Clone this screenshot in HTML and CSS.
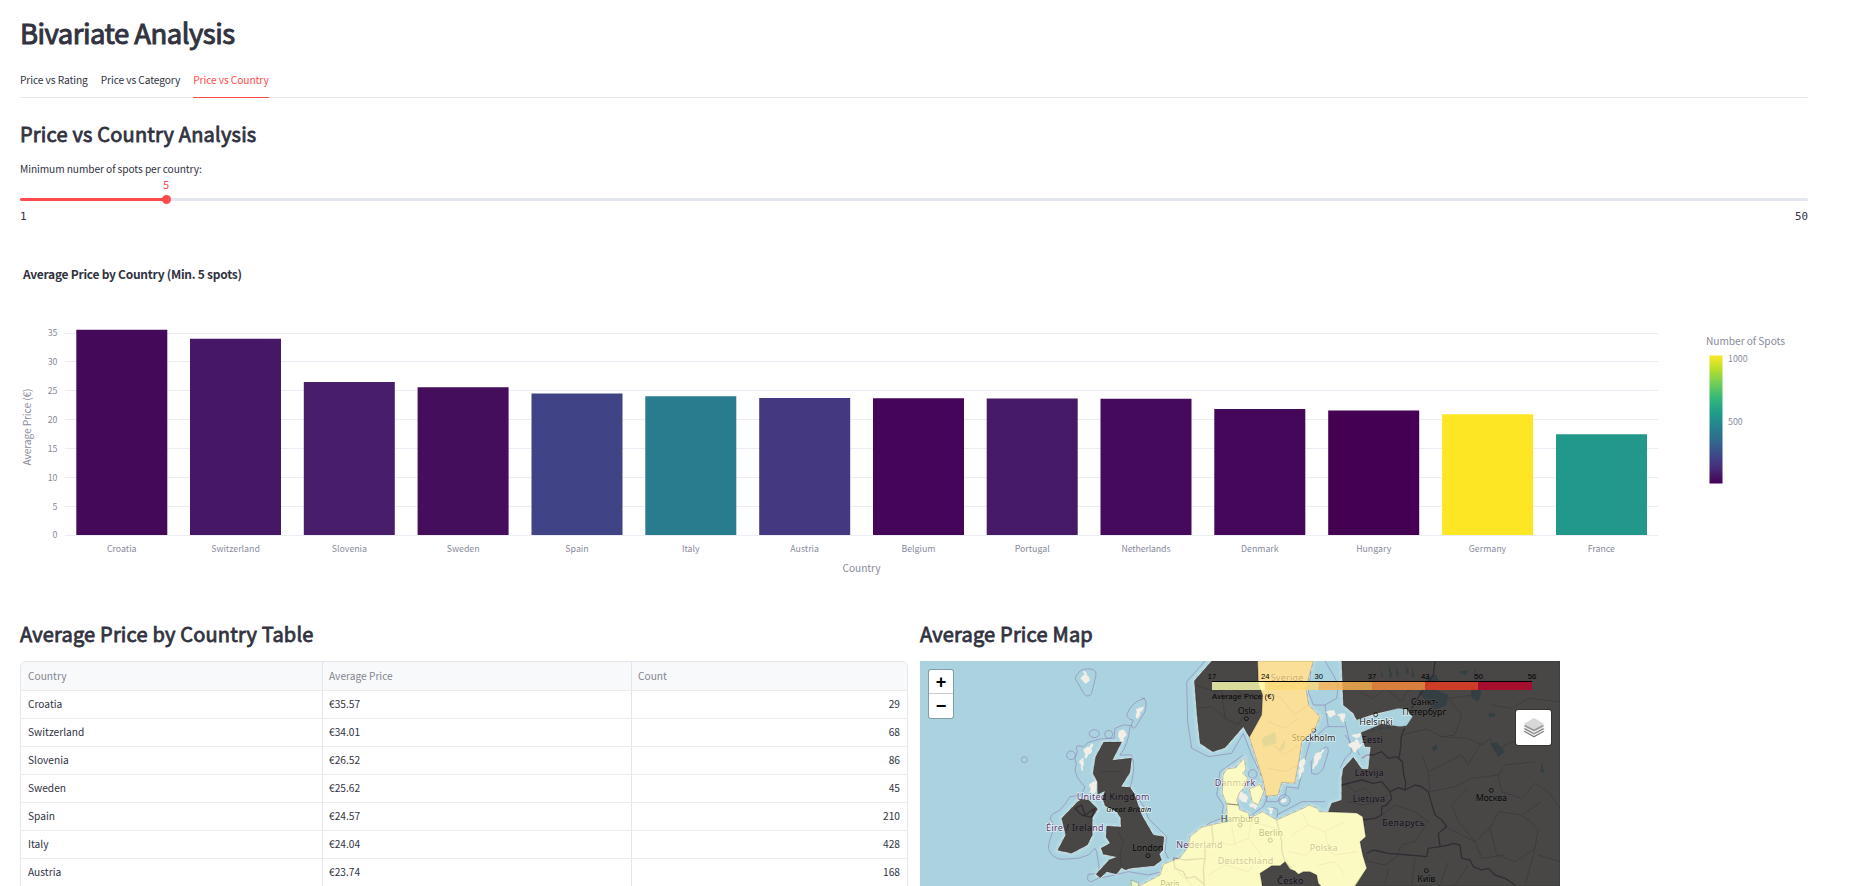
FILE: index.html
```html
<!DOCTYPE html>
<html lang="en">
<head>
<meta charset="utf-8">
<title>Bivariate Analysis</title>
<link rel="stylesheet" href="styles.css">
</head>
<body>
<main class="page">
  <h1 class="title">Bivariate Analysis</h1>
  <nav class="tabs">
    <a class="tab">Price vs Rating</a>
    <a class="tab">Price vs Category</a>
    <a class="tab active">Price vs Country</a>
  </nav>
  <h2 class="heading">Price vs Country Analysis</h2>
  <div class="slider">
    <div class="slider-label">Minimum number of spots per country:</div>
    <div class="track"><div class="fill"><span class="thumb"></span><span class="value">5</span></div></div>
    <div class="limits"><span>1</span><span>50</span></div>
  </div>

  <svg class="chart" width="1788" height="340" viewBox="20 260 1788 340">
    <defs>
      <linearGradient id="viridis" x1="0" y1="1" x2="0" y2="0">
        <stop offset="0" stop-color="#440154"/><stop offset=".111" stop-color="#482878"/>
        <stop offset=".222" stop-color="#3e4989"/><stop offset=".333" stop-color="#31688e"/>
        <stop offset=".444" stop-color="#26828e"/><stop offset=".556" stop-color="#1f9e89"/>
        <stop offset=".667" stop-color="#35b779"/><stop offset=".778" stop-color="#6ece58"/>
        <stop offset=".889" stop-color="#b5de2b"/><stop offset="1" stop-color="#fde725"/>
      </linearGradient>
    </defs>
    <text class="chart-title" x="23" y="279" textLength="219">Average Price by Country (Min. 5 spots)</text>
    <path class="grid" d="M65 535.5H1658M65 506.5H1658M65 477.5H1658M65 448.5H1658M65 419.5H1658M65 390.5H1658M65 361.5H1658M65 333.5H1658"/>
    <g class="tick end">
      <text x="57.5" y="538">0</text><text x="57.5" y="510">5</text><text x="57.5" y="481">10</text><text x="57.5" y="452">15</text>
      <text x="57.5" y="423">20</text><text x="57.5" y="394">25</text><text x="57.5" y="365">30</text><text x="57.5" y="336">35</text>
    </g>
    <g>
      <path fill="#440958" d="M76.3 329.8h91v205.2h-91z"/>
      <path fill="#461767" d="M190 338.8h91v196.2h-91z"/>
      <path fill="#481e6b" d="M303.8 382h91v153h-91z"/>
      <path fill="#450e5d" d="M417.6 387.3h91v147.7h-91z"/>
      <path fill="#404487" d="M531.5 393.4h91v141.6h-91z"/>
      <path fill="#297b8e" d="M645.3 396.3h91v138.7h-91z"/>
      <path fill="#443880" d="M759.2 398h91v137h-91z"/>
      <path fill="#450659" d="M873 398.3h91v136.7h-91z"/>
      <path fill="#461969" d="M986.7 398.4h91v136.6h-91z"/>
      <path fill="#450a5b" d="M1100.5 398.8h91v136.2h-91z"/>
      <path fill="#440759" d="M1214.3 409h91v126h-91z"/>
      <path fill="#440154" d="M1328.2 410.4h91v124.6h-91z"/>
      <path fill="#fde725" d="M1442.1 414.3h91v120.7h-91z"/>
      <path fill="#21988a" d="M1556 434.2h91v100.8h-91z"/>
    </g>
    <g class="tick mid">
      <text x="121.7" y="552">Croatia</text><text x="235.5" y="552">Switzerland</text><text x="349.4" y="552">Slovenia</text>
      <text x="463.2" y="552">Sweden</text><text x="577" y="552">Spain</text><text x="690.8" y="552">Italy</text>
      <text x="804.6" y="552">Austria</text><text x="918.4" y="552">Belgium</text><text x="1032.2" y="552">Portugal</text>
      <text x="1146" y="552" textLength="49">Netherlands</text><text x="1259.8" y="552">Denmark</text><text x="1373.7" y="552">Hungary</text>
      <text x="1487.5" y="552">Germany</text><text x="1601.3" y="552">France</text>
    </g>
    <text class="axis mid" x="861.5" y="572" textLength="38">Country</text>
    <text class="axis mid" transform="translate(31 427) rotate(-90)" textLength="77">Average Price (€)</text>
    <text class="axis" x="1706" y="345" textLength="79">Number of Spots</text>
    <rect x="1709.5" y="355.5" width="13" height="128" fill="url(#viridis)"/>
    <g class="tick"><text x="1728" y="362">1000</text><text x="1728" y="425">500</text></g>
  </svg>

  <div class="columns">
    <section>
      <h2 class="heading">Average Price by Country Table</h2>
      <div class="table">
        <div class="row head"><span>Country</span><span>Average Price</span><span>Count</span></div>
        <div class="row"><span>Croatia</span><span>€35.57</span><span>29</span></div>
        <div class="row"><span>Switzerland</span><span>€34.01</span><span>68</span></div>
        <div class="row"><span>Slovenia</span><span>€26.52</span><span>86</span></div>
        <div class="row"><span>Sweden</span><span>€25.62</span><span>45</span></div>
        <div class="row"><span>Spain</span><span>€24.57</span><span>210</span></div>
        <div class="row"><span>Italy</span><span>€24.04</span><span>428</span></div>
        <div class="row"><span>Austria</span><span>€23.74</span><span>168</span></div>
      </div>
    </section>
    <section>
      <h2 class="heading">Average Price Map</h2>
      <div class="map">
        <svg width="640" height="225" viewBox="15 18 1920 675">
          <defs>
            <path id="gb" d="M566 261L620 261 592 316 650 309 645 352 618 395 645 397 657 415 680 480 715 540 747 545 743 585 733 598 740 615 718 632 645 640 632 645 620 638 604 657 575 650 556 668 543 658 583 614 606 606 565 598 558 580 585 565 573 545 575 513 618 516 617 488 605 470 570 452 563 430 570 408 548 418 547 380 534 355 542 305z"/>
            <path id="ie" d="M440 490L488 440 500 433 522 436 548 462 532 488 532 540 517 570 470 595 428 586 452 540z"/>
            <path id="no" d="M890 18L838 77 846 180 855 265 893 290 930 278 985 215 1003 247 1040 180 1043 120 1030 85 1028 18z"/>
            <path id="se" d="M1028 18L1195 18 1183 60 1173 100 1181 150 1215 185 1198 225 1160 262 1153 310 1139 385 1100 382 1089 420 1054 424 1043 372 1003 247 1040 180 1043 120 1030 85z"/>
            <path id="dk" d="M988 308L992 345 983 355 998 368 987 400 975 410 965 435 971 450 935 446 922 415 924 360 935 342 963 338zM1003 402L1035 388 1046 410 1030 450 1012 440z"/>
            <path id="mid" d="M935 448L971 450 973 464 1001 475 1003 490 1043 470 1085 495 1175 455 1180 450 1207 460 1213 470 1325 474 1343 485 1352 545 1335 560 1343 600 1355 640 1317 700H660L735 660 745 628 795 608 820 575 825 545 860 517 895 508 937 500z"/>
            <path id="fr" d="M648 675L672 684 668 700H650z"/>
            <path id="ru" d="M1280 18H1935V693H1317L1355 640 1343 600 1335 560 1352 545 1343 485 1325 474 1275 474 1240 470 1250 445 1280 435 1280 370 1285 340 1315 307 1340 342 1360 343 1367 275 1350 275 1338 235 1465 213 1400 216 1338 233V213L1325 194 1315 175 1285 150z"/>
            <path id="gulf" d="M1325 194L1375 182 1450 160 1475 162 1493 185 1475 212 1455 215 1400 207 1338 233 1310 240 1300 200z"/>
            <path id="cz" d="M1035 655L1070 632 1095 632 1110 620 1125 642 1140 648 1150 658 1165 650 1185 650 1205 660 1210 685 1225 700H1043z"/>
          </defs>
          <rect class="sea" x="15" y="18" width="1920" height="675"/>
          <g class="halo">
            <use href="#gb"/><use href="#ie"/><use href="#no"/><use href="#se"/><use href="#dk"/><use href="#mid"/><use href="#ru"/>
          </g>
          <g class="sea-border">
            <path d="M480 70Q490 45 510 42 545 38 543 60L530 115Q520 130 508 118z"/>
            <ellipse cx="538" cy="236" rx="15" ry="12"/><circle cx="581" cy="238" r="12"/><circle cx="468" cy="301" r="13"/><circle cx="328" cy="314" r="9"/>
            <path d="M690 130Q650 138 635 180 640 195 655 195L648 212Q655 225 662 215L690 170Q700 130 680 128"/>
            <path d="M653 212L625 210 600 220 597 250 555 252 520 262 505 275Q475 265 487 290L480 310Q488 330 480 345L486 365 500 385 510 395 500 420 465 425Q450 450 435 465L412 478 405 490 420 515Q400 560 400 580 410 610 440 613L490 610 520 600 540 580 545 590 555 655 520 658Q512 680 530 680L550 670 590 662 640 650 700 660 740 650 790 615 820 605 840 585 845 550 880 505 920 490 925 450 905 420 915 350 950 325 985 300"/>
            <path d="M645 215Q640 270 615 300L650 300Q665 330 645 400L670 430 690 460 700 490 730 520 755 545 750 590 760 610"/>
            <path d="M870 18L815 80 818 200 830 280 880 305 950 295 985 235 1010 300 1045 375 1055 440 1085 440 1110 425 1115 395 1150 400 1165 330 1185 260 1235 215 1290 215"/>
            <path d="M1190 30L1180 110 1195 150 1230 150 1265 130 1270 90 1255 60 1230 18M1230 150L1240 215"/>
            <path d="M1215 290Q1240 260 1240 290L1225 340Q1210 365 1190 355L1188 320z"/>
            <circle cx="1108" cy="436" r="17"/><circle cx="1013" cy="357" r="13"/>
            <path d="M1010 480L1045 455 1060 420M1085 490Q1100 450 1060 460M1085 480L1160 440 1230 440M1290 200L1310 290 1290 310 1275 340M1310 230L1375 200 1450 175M1290 240L1335 300"/>
          </g>
          <g class="land">
            <path d="M498 72L508 60 507 50 518 62 522 75 516 85z"/>
            <path d="M612 230L628 225 632 240 622 258 612 250zM508 285L532 268 528 290 512 308zM495 320L505 310 502 345zM525 390L545 375 540 415 528 410z"/>
            <path d="M665 165L685 155 675 175 665 193z"/>
            <path d="M970 418Q985 405 998 430L995 440 978 438zM1005 448L1025 448 1022 460 1008 455z"/>
            <path d="M1200 300L1225 285 1212 315 1195 340zM1155 320L1170 310 1163 350 1152 370zM1060 460L1075 462 1068 475zM1100 434h14v6h-14zM1235 172L1255 165 1260 180 1245 185zM1270 180L1290 175 1285 200z"/>
            <path d="M1302 270L1325 255 1338 270 1320 290zM1310 240L1335 235 1330 250z"/>
            <use href="#gb"/><use href="#ie"/><use href="#no"/><use href="#se"/><use href="#dk"/><use href="#mid"/><use href="#ru"/>
          </g>
          <use class="gulf" href="#gulf"/>
          <g class="lakes">
            <path d="M1510 110L1550 100 1600 120 1595 150 1560 165 1535 140zM1665 90L1700 110 1690 140 1670 130zM1630 50L1660 45 1650 60zM1725 265L1745 262 1770 290 1750 305zM1550 278L1565 268 1568 280 1555 290zM1720 175h20v10h-20zM1880 320L1888 355 1876 350zM1420 25L1432 60 1425 75zM1440 30L1452 58 1446 70zM1470 25L1483 52 1475 60zM1490 35L1500 65 1492 68zM1395 40L1405 62 1400 68zM1530 65L1565 60 1572 80 1540 88zM1040 250L1080 230 1085 265 1045 275zM1088 290L1112 250 1108 280z"/>
          </g>
          <g class="region">
            <path d="M1333 110L1375 130 1410 100 1460 140 1475 110 1520 90 1560 60M1460 240L1535 222 1580 245 1660 250 1700 270 1725 250 1740 290 1780 265 1850 245 1870 205M1520 300L1540 350 1640 300 1660 330 1700 260M1540 350L1545 410 1620 395 1670 370 1750 360 1770 330 1860 320M1750 360L1760 410 1820 430 1860 385 1900 410 1935 460M1660 400L1610 450 1630 500 1680 560 1725 520 1750 470 1820 480 1880 440M1725 520L1745 600 1800 620 1860 580 1870 520 1820 480M1600 520L1680 560 1700 610 1770 600M1335 570L1360 620 1410 630 1450 600M1445 600L1460 570 1500 560 1540 500M1400 480L1440 450 1500 470 1540 500M1420 640L1410 690M1500 610L1490 690M1600 620L1575 690M1660 630L1620 690M1870 600L1935 620M1830 690L1860 580M1640 180L1620 240 1580 245M1640 180L1600 130 1675 120 1680 40M1730 150L1790 160 1840 130 1935 140"/>
            <path d="M850 160L890 155 930 190 970 210 985 180 1040 170M845 90L900 110 950 100 1000 130M920 110L930 190M1055 110L1100 130 1140 180 1180 150M1060 200L1110 220 1150 190M1075 270L1110 300 1150 270M1060 340L1110 350 1150 330M560 350L620 350M610 530L625 560 615 600 620 635"/>
            <path d="M900 560L950 570 1000 550 1040 600 1000 650 930 630 880 660M950 510L960 570M1000 550L1010 500 1080 520M1130 540L1180 510 1230 530 1290 500M1120 590L1170 600 1210 570 1260 600 1330 590M1160 470L1180 510M1230 530L1240 580M1210 630L1260 620 1290 660M780 640L830 690M1290 385L1320 410 1350 400 1380 430 1420 420M1300 440L1340 450 1390 440"/>
          </g>
          <g class="country">
            <path d="M1560 18L1555 60 1520 110 1490 160M1470 220Q1455 240 1458 270L1452 310 1462 320 1466 360 1472 380 1470 405 1450 398 1425 410 1400 380 1375 385 1340 375 1280 390M1340 310L1355 300 1375 300 1400 290 1420 310 1445 305 1462 320M1425 410L1430 430 1415 450 1400 455 1400 480 1380 490 1345 495M1470 405L1500 390 1520 395 1540 410 1548 440 1560 480 1580 495 1595 515 1570 535 1575 575 1600 570 1615 565 1635 570 1640 610 1665 615 1675 635 1700 645 1720 640 1740 660 1770 670 1800 690M1575 575L1540 580 1535 605 1480 600 1420 595 1375 585 1355 595"/>
            <path d="M890 510L895 560 870 580 870 610 865 640 868 693M775 608L810 615 870 610M775 608L780 640 805 650 815 670 840 665 870 690M1085 495L1100 560 1100 585 1110 620 1130 640M937 445L971 450M480 460L500 450 510 480 540 460 530 487 500 480z"/>
          </g>
          <g class="label">
            <g class="purple">
              <text x="485" y="434" textLength="218">United Kingdom</text><text x="393" y="527" textLength="173">Éire / Ireland</text>
              <text x="1067" y="78" textLength="98">Sverige</text><text x="899" y="392" textLength="122">Danmark</text>
              <text x="784" y="579" textLength="139">Nederland</text><text x="908" y="626" textLength="167">Deutschland</text>
              <text x="1184" y="587" textLength="84">Polska</text><text x="1340" y="265" textLength="63">Eesti</text>
              <text x="1319" y="363" textLength="87">Latvija</text><text x="1313" y="442" textLength="97">Lietuva</text>
              <text x="1402" y="513" textLength="127">Беларусь</text><text x="1087" y="687" textLength="78">Česko</text>
            </g>
            <text class="italic" x="574" y="472" textLength="135">Great Britain</text>
            <text x="968" y="178" textLength="54">Oslo</text><text x="1130" y="258" textLength="131">Stockholm</text>
            <text x="917" y="500" textLength="116">Hamburg</text><text x="1031" y="542" textLength="73">Berlin</text>
            <text x="652" y="587" textLength="93">London</text><text x="736" y="697" textLength="57">Paris</text>
            <text x="1333" y="211" textLength="100">Helsinki</text><text x="1488" y="150" textLength="82">Санкт-</text>
            <text x="1462" y="181" textLength="132">Петербург</text><text x="1682" y="438" textLength="94">Москва</text><text x="1507" y="680" textLength="54">Київ</text>
          </g>
          <g class="dot">
            <circle cx="994" cy="191" r="6"/><circle cx="1196" cy="226" r="6"/><circle cx="975" cy="510" r="6"/><circle cx="1066" cy="556" r="6"/>
            <circle cx="699" cy="602" r="6"/><circle cx="1382" cy="179" r="6"/><circle cx="1729" cy="406" r="6"/><circle cx="1534" cy="647" r="6"/>
          </g>
          <g class="overlay">
            <g><use href="#gb"/><use href="#ie"/><use href="#no"/><use href="#cz"/><path d="M1280 18H1935V693H1317L1355 640 1343 600 1335 560 1352 545 1343 485 1325 474 1240 470 1250 445 1280 435 1280 370 1285 340 1315 307 1340 342 1360 343 1367 275 1350 275 1338 233 1400 207 1455 215 1475 212 1493 185 1475 162 1450 160 1375 178 1325 194 1315 175 1285 150z"/></g>
            <use class="mid-price" href="#se"/>
            <g class="low-price"><use href="#dk"/><path d="M935 448L971 450 973 464 1001 475 1003 490 1043 470 1085 495 1175 455 1180 450 1207 460 1213 470 1325 474 1343 485 1352 545 1335 560 1343 600 1355 640 1317 700H1225L1210 685 1205 660 1185 650 1165 650 1150 658 1140 648 1125 642 1110 620 1095 632 1070 632 1035 655 1043 700H660L735 660 745 628 795 608 820 575 825 545 860 517 895 508 937 500z"/><use href="#fr"/></g>
          </g>
          <g opacity=".8">
            <path fill="#ffffb2" d="M891 81h160v24h-160z"/><path fill="#fed976" d="M1051 81h160v24h-160z"/>
            <path fill="#feb24c" d="M1211 81h160v24h-160z"/><path fill="#fd8d3c" d="M1371 81h159v24h-159z"/>
            <path fill="#f03b20" d="M1530 81h159v24h-159z"/><path fill="#bd0026" d="M1689 81h162v24h-162z"/>
          </g>
          <path stroke="#000" stroke-width="3" d="M891 79.500H1851"/>
          <g class="legend">
            <text x="891" y="71">17</text><text x="1051" y="71">24</text><text x="1211" y="71">30</text><text x="1371" y="71">37</text>
            <text x="1531" y="71">43</text><text x="1691" y="71">50</text><text x="1851" y="71">56</text>
            <text class="start" x="891" y="131" textLength="187">Average Price (€)</text>
          </g>
        </svg>
        <div class="zoom"><span>+</span><span>−</span></div>
        <div class="layers">
          <svg width="22" height="22" viewBox="0 0 22 22">
            <path fill="#7c7c7c" d="M.5 14.500L11 9l10.500 5.500L11 20.500z"/><path fill="#f4f4f4" d="M.5 13.300L11 8l10.500 5.300L11 19z"/>
            <path fill="#8a8a8a" d="M.5 12L11 6l10.500 6L11 17.500z"/><path fill="#f4f4f4" d="M.5 10.300L11 5l10.500 5.300L11 16z"/>
            <path fill="#989898" d="M.5 9L11 4l10.500 5L11 14.500z"/><path fill="#d8d8d8" d="M.5 7L11 1l10.500 6L11 12.500z"/>
          </svg>
        </div>
      </div>
    </section>
  </div>
</main>
</body>
</html>
```
FILE: styles.css
```css
* { box-sizing: border-box; }
html, body { height: 100%; overflow: hidden; }
body {
  margin: 0;
  background: #fff;
  color: #31333f;
  font-family: "Noto Sans CJK SC", "Open Sans", sans-serif;
  font-size: 10.2px;
}
.page { width: 1853px; height: 886px; overflow: hidden; padding: 12px 45px 0 20px; }
.title { margin: 0; height: 59px; line-height: 40px; font-size: 27.5px; font-weight: 400; letter-spacing: -.52px; -webkit-text-stroke: 1px; }
.tabs { display: flex; gap: 13px; height: 27px; border-bottom: 1px solid #e6e7ea; line-height: 17px; letter-spacing: -.09px; }
.tab { height: 27px; }
.tab.active { color: #ff4b4b; border-bottom: 1px solid #ff4b4b; }
.heading { margin: 0; font-size: 20px; font-weight: 400; letter-spacing: .2px; -webkit-text-stroke: .8px; line-height: 30px; white-space: nowrap; }
.page > .heading { margin-top: 21px; }
.slider { height: 111px; padding-top: 12px; }
.slider-label { line-height: 15px; height: 21px; margin-bottom: 16px; letter-spacing: -.09px; }
.track { height: 3px; border-radius: 2px; background: #e3e6ee; }
.fill { position: relative; width: 146px; height: 3px; border-radius: 2px; background: #ff4b4b; }
.thumb { position: absolute; right: -5px; top: -3px; width: 9px; height: 9px; border-radius: 50%; background: #ff4b4b; }
.value { position: absolute; right: -3px; top: -22px; line-height: 16px; font-size: 11px; color: #ff4b4b; }
.limits { display: flex; justify-content: space-between; padding-top: 8px; line-height: 16px; font-size: 10.8px; font-family: "DejaVu Sans Mono", monospace; }
.chart { display: block; }
.chart-title { font-size: 12px; font-weight: 700; fill: #31333f; }
.grid { stroke: #ecedf4; fill: none; }
.tick { font-size: 8.8px; fill: #888b9b; }
.axis { font-size: 10.2px; fill: #888b9b; }
.end { text-anchor: end; }
.mid { text-anchor: middle; }
.columns { display: grid; grid-template-columns: 888px 888px; gap: 12px; margin-top: 19px; }
.columns .heading { height: 42px; }
.table { height: 226px; border: 1px solid #e6e7ea; border-bottom: 0; border-radius: 6px 6px 0 0; overflow: hidden; }
.row { display: grid; grid-template-columns: 302px 309px 1fr; height: 28px; line-height: 25px; border-bottom: 1px solid #ececee; }
.row span { padding: 0 7px; border-right: 1px solid #e4e5e9; }
.row span + span { padding-left: 6px; }
.row span:last-child { border-right: 0; text-align: right; }
.row.head { height: 29px; line-height: 27px; background: #f8f9fb; color: #83858e; }
.row.head span:last-child { text-align: left; }
.map { position: relative; width: 640px; height: 225px; font-family: "Noto Sans", sans-serif; }
.map > svg { display: block; }
.sea { fill: #aad3df; }
.halo { fill: none; stroke: #b1d8e3; stroke-width: 20; stroke-linejoin: round; }
.sea-border { fill: none; stroke: #8f7fb0; stroke-opacity: .6; stroke-width: 3; stroke-linejoin: round; }
.land { fill: #f2efe9; stroke: #f2efe9; stroke-width: 5; stroke-linejoin: round; stroke-dasharray: 14 9; }
.gulf, .lakes { fill: #aad3df; }
.region { fill: none; stroke: #c9bccb; stroke-width: 2.5; stroke-linejoin: round; }
.country { fill: none; stroke: #a594ab; stroke-width: 4; stroke-linejoin: round; }
.label { font-size: 27px; fill: #222; stroke: #fff; stroke-opacity: .6; stroke-width: 5; paint-order: stroke; }
.purple { fill: #5d3b70; }
.italic { font-style: italic; font-size: 22px; fill: #000; }
.dot { fill: none; stroke: #444; stroke-width: 3; }
.overlay > * { fill-opacity: .7; stroke: #000; stroke-opacity: .2; stroke-width: 3; stroke-linejoin: round; }
.mid-price { fill: #fed976; }
.low-price { fill: #ffffb2; }
.legend { font-family: "Liberation Sans", sans-serif; font-size: 23px; text-anchor: middle; }
.legend .start { text-anchor: start; }
.zoom, .layers { position: absolute; background: #fff; border: 1px solid rgba(0, 0, 0, .25); background-clip: padding-box; border-radius: 3px; }
.zoom { left: 8px; top: 8px; width: 26px; height: 50px; color: #000; font: 700 18px/24px "Liberation Sans", sans-serif; text-align: center; }
.zoom span { display: block; height: 24px; }
.zoom span:first-child { border-bottom: 1px solid #ccc; }
.layers { right: 8px; top: 48px; width: 37px; height: 37px; display: flex; align-items: center; justify-content: center; }
```
